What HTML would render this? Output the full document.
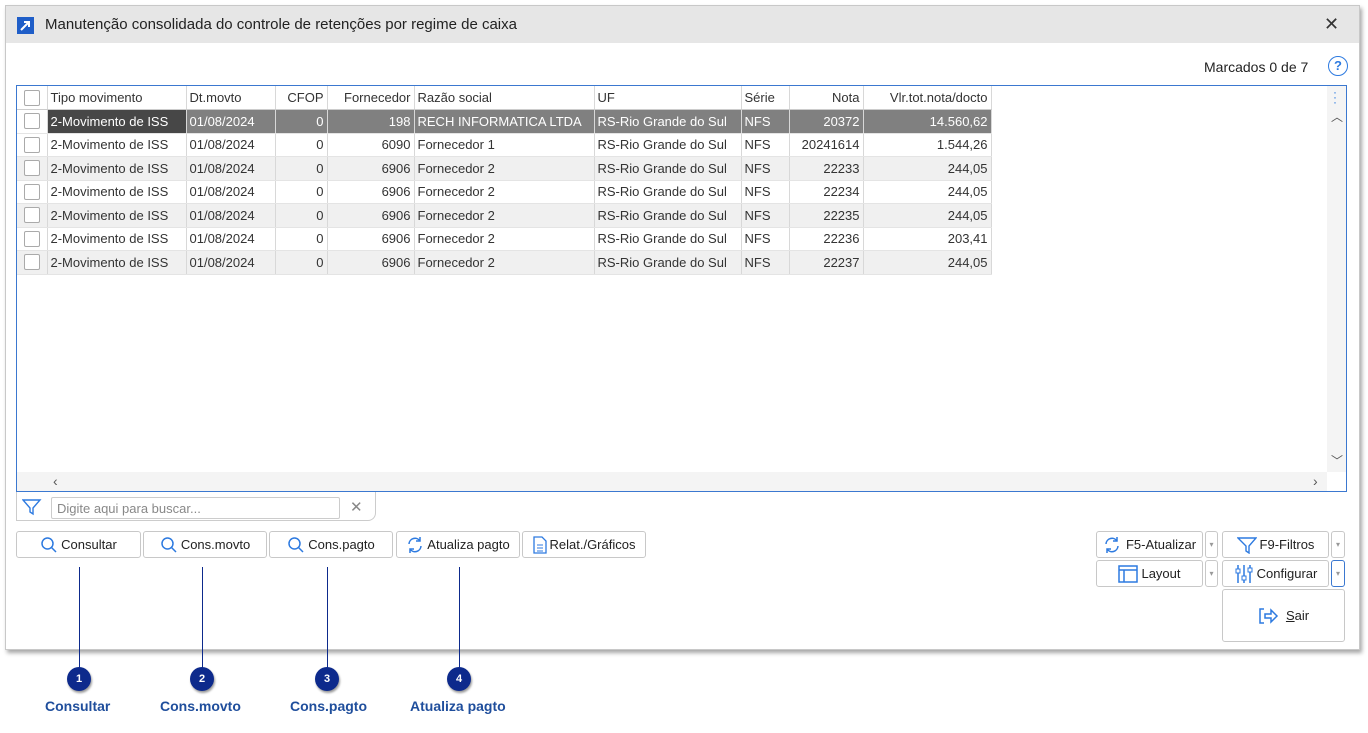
<!DOCTYPE html>
<html><head><meta charset="utf-8"><style>
*{box-sizing:border-box;margin:0;padding:0}
body{width:1368px;height:733px;background:#fff;font-family:"Liberation Sans",sans-serif;position:relative;overflow:hidden;font-size:13px;color:#222}
.win{position:absolute;left:5px;top:5px;width:1355px;height:645px;background:#fff;border:1px solid #c8c8c8;box-shadow:2px 3px 4px rgba(0,0,0,.35)}
.title{position:absolute;left:0;top:0;right:0;height:37px;background:#e6e6e6}
.abs{position:absolute}
.grid{position:absolute;left:16px;top:85px;width:1331px;height:407px;border:1px solid #3b78d0;background:#fff;overflow:hidden}
table{border-collapse:collapse;position:absolute;left:0;top:0;font-size:13px;table-layout:fixed}
td{height:23.5px;border-right:1px solid #d8d8d8;border-bottom:1px solid #e4e4e4;padding:0 3px;white-space:nowrap;color:#333;overflow:hidden}
td.r{text-align:right}
tr.h td{background:#fff;border-bottom:1px solid #ccc;color:#333}
tr.g td{background:#f0f0f0}
tr.s td{background:#808080;color:#fff}
tr.s td.d{background:#474747}
.cb{width:16px;height:16px;border:1px solid #aaa;border-radius:2px;background:#fff;margin:0 auto}
.btn{position:absolute;height:27px;border:1px solid #c8c8c8;border-radius:3px;background:#fff;display:flex;align-items:center;justify-content:center;gap:3px;font-size:13px;color:#222}
.circ{position:absolute;width:24px;height:24px;border-radius:50%;background:#0d2a8c;color:#fff;font-weight:bold;font-size:11px;text-align:center;line-height:24px;box-shadow:1px 2px 2px rgba(0,0,0,.4)}
.line{position:absolute;width:1px;background:#0d2a8c;top:567px;height:101px}
.lab{position:absolute;top:698px;font-weight:bold;color:#1f4e9c;font-size:14px;white-space:nowrap}
</style></head><body>
<div class="win">
 <div class="title">
  <div class="abs" style="left:11px;top:11px;width:17px;height:17px;background:#1f5ec8"><svg width="17" height="17"><path d="M4 13L12 5M7 5H12V10" stroke="#fff" stroke-width="2" fill="none"/></svg></div>
  <div class="abs" style="left:39px;top:10px;font-size:15px;color:#222">Manutenção consolidada do controle de retenções por regime de caixa</div>
  <div class="abs" style="left:1318px;top:8px;font-size:18px;color:#333">✕</div>
 </div>
 <div class="abs" style="left:1198px;top:53px;font-size:14px">Marcados 0 de 7</div>
 <div class="abs" style="left:1322px;top:50px;width:20px;height:20px;border:1.5px solid #2d7ae0;border-radius:50%;color:#2d7ae0;font-size:13px;text-align:center;line-height:17px;font-weight:bold">?</div>
</div>
<div class="grid">
<table style="width:974px">
<colgroup><col style="width:30px"><col style="width:139px"><col style="width:89px"><col style="width:52px"><col style="width:87px"><col style="width:180px"><col style="width:147px"><col style="width:48px"><col style="width:74px"><col style="width:128px"></colgroup>
<tr class="h"><td><div class="cb"></div></td><td>Tipo movimento</td><td>Dt.movto</td><td class="r">CFOP</td><td class="r">Fornecedor</td><td>Razão social</td><td>UF</td><td>Série</td><td class="r">Nota</td><td class="r">Vlr.tot.nota/docto</td></tr>
<tr class="s"><td style="background:#fff"><div class="cb"></div></td><td class="d">2-Movimento de ISS</td><td>01/08/2024</td><td class="r">0</td><td class="r">198</td><td>RECH INFORMATICA LTDA</td><td>RS-Rio Grande do Sul</td><td>NFS</td><td class="r">20372</td><td class="r">14.560,62</td></tr>
<tr><td><div class="cb"></div></td><td>2-Movimento de ISS</td><td>01/08/2024</td><td class="r">0</td><td class="r">6090</td><td>Fornecedor 1</td><td>RS-Rio Grande do Sul</td><td>NFS</td><td class="r">20241614</td><td class="r">1.544,26</td></tr>
<tr class="g"><td><div class="cb"></div></td><td>2-Movimento de ISS</td><td>01/08/2024</td><td class="r">0</td><td class="r">6906</td><td>Fornecedor 2</td><td>RS-Rio Grande do Sul</td><td>NFS</td><td class="r">22233</td><td class="r">244,05</td></tr>
<tr><td><div class="cb"></div></td><td>2-Movimento de ISS</td><td>01/08/2024</td><td class="r">0</td><td class="r">6906</td><td>Fornecedor 2</td><td>RS-Rio Grande do Sul</td><td>NFS</td><td class="r">22234</td><td class="r">244,05</td></tr>
<tr class="g"><td><div class="cb"></div></td><td>2-Movimento de ISS</td><td>01/08/2024</td><td class="r">0</td><td class="r">6906</td><td>Fornecedor 2</td><td>RS-Rio Grande do Sul</td><td>NFS</td><td class="r">22235</td><td class="r">244,05</td></tr>
<tr><td><div class="cb"></div></td><td>2-Movimento de ISS</td><td>01/08/2024</td><td class="r">0</td><td class="r">6906</td><td>Fornecedor 2</td><td>RS-Rio Grande do Sul</td><td>NFS</td><td class="r">22236</td><td class="r">203,41</td></tr>
<tr class="g"><td><div class="cb"></div></td><td>2-Movimento de ISS</td><td>01/08/2024</td><td class="r">0</td><td class="r">6906</td><td>Fornecedor 2</td><td>RS-Rio Grande do Sul</td><td>NFS</td><td class="r">22237</td><td class="r">244,05</td></tr>
</table>
<div class="abs" style="left:1310px;top:0;width:20px;height:386px;background:#f4f4f4"></div>
<div class="abs" style="left:1316px;top:4px;color:#2d7ae0;font-size:12px;line-height:5px">·<br>·<br>·</div>
<div class="abs" style="left:1314px;top:22px;color:#555;font-size:12px">︿</div>
<div class="abs" style="left:1314px;top:366px;color:#555;font-size:12px">﹀</div>
<div class="abs" style="left:0;top:386px;width:1310px;height:19px;background:#f4f4f4"></div>
<div class="abs" style="left:36px;top:387px;color:#555;font-size:14px">‹</div>
<div class="abs" style="left:1296px;top:387px;color:#555;font-size:14px">›</div>
</div>
<div class="abs" style="left:16px;top:492px;width:360px;height:29px;border:1px solid #ccc;border-top:none;border-radius:0 0 8px 0;background:#fff"></div>
<svg class="abs" style="left:22px;top:498px" width="20" height="18"><path d="M1 2H18L11 10V16L8 14V10Z" fill="none" stroke="#2d7ae0" stroke-width="1.4"/></svg>
<div class="abs" style="left:51px;top:497px;width:289px;height:22px;border:1px solid #ccc;border-radius:2px;color:#888;padding:3px 5px;font-size:13px">Digite aqui para buscar...</div>
<div class="abs" style="left:350px;top:498px;color:#888;font-size:15px">✕</div>
<div class="btn" style="left:16px;top:531px;width:125px"><svg width="18" height="18"><circle cx="7.5" cy="7.5" r="5.5" fill="none" stroke="#2d7ae0" stroke-width="1.5"/><path d="M11.5 11.5L16 16" stroke="#2d7ae0" stroke-width="1.5"/></svg>Consultar</div>
<div class="btn" style="left:143px;top:531px;width:124px"><svg width="18" height="18"><circle cx="7.5" cy="7.5" r="5.5" fill="none" stroke="#2d7ae0" stroke-width="1.5"/><path d="M11.5 11.5L16 16" stroke="#2d7ae0" stroke-width="1.5"/></svg>Cons.movto</div>
<div class="btn" style="left:269px;top:531px;width:124px"><svg width="18" height="18"><circle cx="7.5" cy="7.5" r="5.5" fill="none" stroke="#2d7ae0" stroke-width="1.5"/><path d="M11.5 11.5L16 16" stroke="#2d7ae0" stroke-width="1.5"/></svg>Cons.pagto</div>
<div class="btn" style="left:396px;top:531px;width:124px"><svg width="18" height="18"><path d="M3 8A6 6 0 0 1 14 5M15 10A6 6 0 0 1 4 13" fill="none" stroke="#2d7ae0" stroke-width="1.5"/><path d="M14 1V5H10M4 17V13H8" fill="none" stroke="#2d7ae0" stroke-width="1.5"/></svg>Atualiza pagto</div>
<div class="btn" style="left:522px;top:531px;width:124px"><svg width="14" height="18"><path d="M1 1H9L13 5V17H1Z" fill="none" stroke="#2d7ae0" stroke-width="1.3"/><path d="M4 9H10M4 12H10M4 15H10" stroke="#2d7ae0"/></svg>Relat./Gráficos</div>
<div class="btn" style="left:1096px;top:531px;width:107px"><svg width="20" height="18"><path d="M3 8A6 6 0 0 1 14 5M15 10A6 6 0 0 1 4 13" fill="none" stroke="#2d7ae0" stroke-width="1.5"/><path d="M14 1V5H10M4 17V13H8" fill="none" stroke="#2d7ae0" stroke-width="1.5"/></svg>F5-Atualizar</div>
<div class="btn" style="left:1205px;top:531px;width:13px;font-size:8px;color:#999">▾</div>
<div class="btn" style="left:1222px;top:531px;width:107px"><svg width="20" height="18"><path d="M1 2H19L12 10V17L9 15V10Z" fill="none" stroke="#2d7ae0" stroke-width="1.4"/></svg>F9-Filtros</div>
<div class="btn" style="left:1331px;top:531px;width:14px;font-size:8px;color:#999">▾</div>
<div class="btn" style="left:1096px;top:560px;width:107px"><svg width="20" height="18"><rect x="1" y="1" width="18" height="16" fill="none" stroke="#2d7ae0" stroke-width="1.5"/><path d="M1 5H19M6 5V17" stroke="#2d7ae0" stroke-width="1.5"/></svg>Layout</div>
<div class="btn" style="left:1205px;top:560px;width:13px;font-size:8px;color:#999">▾</div>
<div class="btn" style="left:1222px;top:560px;width:107px"><svg width="20" height="20"><path d="M4 1V19M10 1V19M16 1V19" stroke="#2d7ae0" stroke-width="1.5"/><rect x="2" y="5" width="4" height="4" fill="#fff" stroke="#2d7ae0"/><rect x="8" y="12" width="4" height="4" fill="#fff" stroke="#2d7ae0"/><rect x="14" y="4" width="4" height="4" fill="#fff" stroke="#2d7ae0"/></svg>Configurar</div>
<div class="btn" style="left:1331px;top:560px;width:14px;font-size:8px;color:#999;border-color:#3b78d0">▾</div>
<div class="btn" style="left:1222px;top:589px;width:123px;height:53px;gap:6px"><svg width="22" height="18"><path d="M6 2H2V16H6" fill="none" stroke="#2d7ae0" stroke-width="1.5"/><path d="M7 7H13V3L19 9L13 15V11H7Z" fill="none" stroke="#2d7ae0" stroke-width="1.5"/></svg><span><u>S</u>air</span></div>
<div class="line" style="left:79px"></div><div class="line" style="left:202px"></div><div class="line" style="left:327px"></div><div class="line" style="left:459px"></div>
<div class="circ" style="left:67px;top:667px">1</div>
<div class="circ" style="left:190px;top:667px">2</div>
<div class="circ" style="left:315px;top:667px">3</div>
<div class="circ" style="left:447px;top:667px">4</div>
<div class="lab" style="left:45px">Consultar</div>
<div class="lab" style="left:160px">Cons.movto</div>
<div class="lab" style="left:290px">Cons.pagto</div>
<div class="lab" style="left:410px">Atualiza pagto</div>
</body></html>
